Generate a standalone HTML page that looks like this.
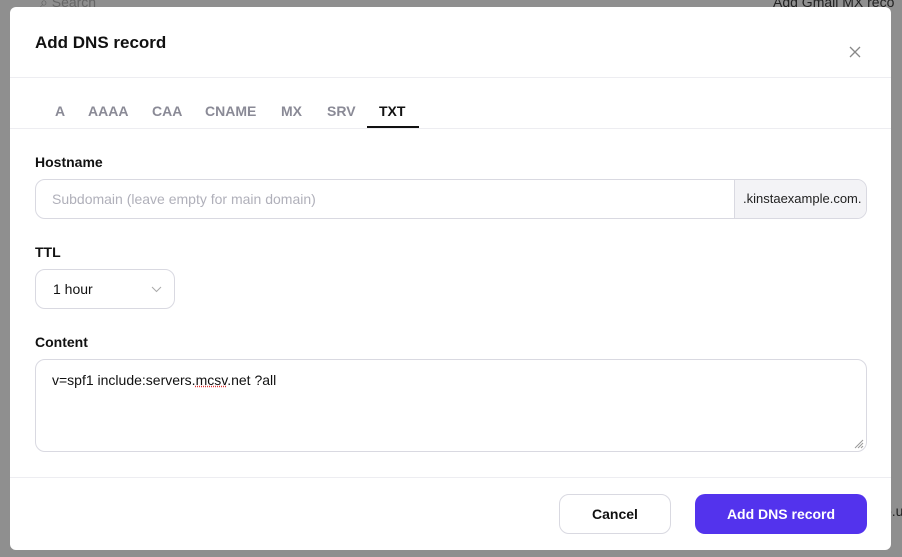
<!DOCTYPE html>
<html><head><style>
*{box-sizing:border-box;margin:0;padding:0}
body{width:902px;height:557px;background:#8f8f8f;font-family:"Liberation Sans",sans-serif;position:relative;overflow:hidden}
.bg{position:absolute;color:#222;font-size:14px}
.modal{position:absolute;left:10px;top:7px;width:881px;height:543px;background:#fff;border-radius:6px}
.abs{position:absolute}
h1{position:absolute;left:25px;top:26px;font-size:17px;font-weight:bold;color:#111}
.line{position:absolute;left:0;right:0;height:1px;background:#ededf1}
.tab{position:absolute;top:96px;font-size:14px;color:#8a8a96;font-weight:bold}
label{position:absolute;left:25px;font-size:14px;color:#111;font-weight:bold}
.box{position:absolute;border:1px solid #d9d9e1;border-radius:10px}
.btn{position:absolute;top:487px;height:40px;border-radius:10px;font-size:14px;font-weight:bold;display:flex;align-items:center;justify-content:center}
</style></head><body>
<div class="bg" style="left:40px;top:-6px;color:#666">⌕ Search</div>
<div class="bg" style="left:773px;top:-6px">Add Gmail MX reco</div>
<div class="bg" style="left:884px;top:503px">o.u</div>
<div class="modal">
<h1>Add DNS record</h1>
<svg class="abs" style="left:839px;top:39px" width="12" height="12"><path d="M1 1L11 11M11 1L1 11" stroke="#888" stroke-width="1.3"/></svg>
<div class="line" style="top:70px"></div>
<span class="tab" style="left:45px">A</span>
<span class="tab" style="left:78px">AAAA</span>
<span class="tab" style="left:142px">CAA</span>
<span class="tab" style="left:195px">CNAME</span>
<span class="tab" style="left:271px">MX</span>
<span class="tab" style="left:317px">SRV</span>
<span class="tab" style="left:369px;color:#111">TXT</span>
<div class="abs" style="left:357px;top:119px;width:52px;height:2px;background:#111"></div>
<div class="line" style="top:121px"></div>
<label style="top:147px">Hostname</label>
<div class="box" style="left:25px;top:172px;width:832px;height:40px;overflow:hidden">
<span class="abs" style="left:16px;top:11px;font-size:14px;color:#b0b0ba">Subdomain (leave empty for main domain)</span>
<div class="abs" style="right:0;top:0;bottom:0;width:132px;background:#f3f3f6;border-left:1px solid #d9d9e1;font-size:13px;color:#222;padding:11px 0 0 8px">.kinstaexample.com.</div>
</div>
<label style="top:237px">TTL</label>
<div class="box" style="left:25px;top:262px;width:140px;height:40px">
<span class="abs" style="left:17px;top:11px;font-size:14px;color:#111">1 hour</span>
<svg class="abs" style="left:115px;top:16px" width="11" height="7"><path d="M1 1L5.5 5.5L10 1" stroke="#aaa" fill="none"/></svg>
</div>
<label style="top:327px">Content</label>
<div class="box" style="left:25px;top:352px;width:832px;height:93px">
<span class="abs" style="left:16px;top:12px;font-size:14px;color:#111">v=spf1 include:servers.<span style="text-decoration:underline dotted #d33">mcsv</span>.net ?all</span>
<svg class="abs" style="right:2px;bottom:2px" width="10" height="10"><path d="M9 1L1 9M9 4L4 9M9 7L7 9" stroke="#999"/></svg>
</div>
<div class="line" style="top:470px"></div>
<div class="btn" style="left:549px;width:112px;border:1px solid #d9d9e1;color:#111">Cancel</div>
<div class="btn" style="left:685px;width:172px;background:#5333ed;color:#fff">Add DNS record</div>
</div>
</body></html>
